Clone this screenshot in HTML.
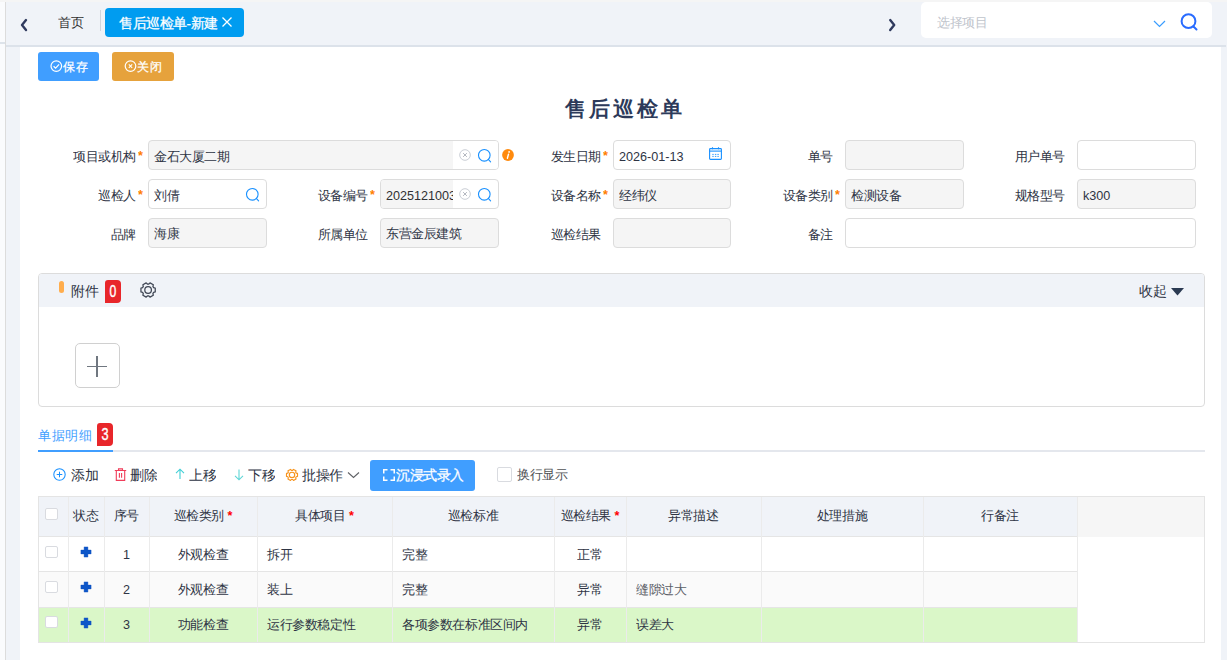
<!DOCTYPE html>
<html><head><meta charset="utf-8">
<style>
*{box-sizing:border-box;margin:0;padding:0}
html,body{width:1227px;height:660px;overflow:hidden;background:#f5f5f5;font-family:"Liberation Sans",sans-serif;color:#303133}
.a{position:absolute}
.t{position:absolute;white-space:nowrap;transform:scale(.9);transform-origin:0 0;line-height:20px}
.tr{position:absolute;white-space:nowrap;transform:scale(.9);transform-origin:100% 0;line-height:20px;text-align:right}
.tc{position:absolute;white-space:nowrap;transform:scale(.9);transform-origin:50% 0;line-height:20px;text-align:center}
.inp{position:absolute;height:30px;border:1px solid #dcdcdc;border-radius:4px;background:#fff}
.dis{background:#f5f5f5}
.cb{position:absolute;width:13px;height:13px;border:1px solid #d9dbe0;border-radius:2px;background:#fff}
</style></head><body>

<div class="a" style="left:0;top:2px;width:5px;height:658px;background:#fafbfd"></div>
<div class="a" style="left:0;top:42px;width:5px;height:2px;background:#dde3ea"></div>
<div class="a" style="left:5px;top:2px;width:1px;height:658px;background:#dcdcdc"></div>
<div class="a" style="left:6px;top:2px;width:1221px;height:43px;background:#f0f3f8"></div>
<div class="a" style="left:6px;top:45px;width:1220px;height:2px;background:#dce2ea"></div>
<div class="a" style="left:1226px;top:45px;width:1px;height:2px;background:#f0f3f8"></div>
<div class="a" style="left:6px;top:47px;width:14px;height:613px;background:#f0f3f8"></div>
<div class="a" style="left:1221px;top:47px;width:6px;height:613px;background:#f0f3f8"></div>
<div class="a" style="left:20px;top:47px;width:1201px;height:613px;background:#fff"></div>
<svg class="a" style="left:19px;top:17px" width="12" height="16" viewBox="0 0 12 16"><path d="M7 3.1 L3 8.1 L7 13.1" fill="none" stroke="#2f3a5e" stroke-width="2.4" stroke-linecap="round" stroke-linejoin="round"/></svg>
<div class="t" style="left:58px;top:13.3px;font-size:14px;color:#333;">首页</div>
<div class="a" style="left:100px;top:10px;width:1px;height:21px;background:#d0d4dc"></div>
<div class="a" style="left:105px;top:8px;width:139px;height:29px;border-radius:4px;background:#009cf0"></div>
<div class="t" style="left:119px;top:14px;font-size:15px;color:#fff;-webkit-text-stroke:0.3px #fff">售后巡检单-新建</div>
<svg class="a" style="left:221px;top:16px" width="12" height="12" viewBox="0 0 12 12"><path d="M1.5 1.5 L10.5 10.5 M10.5 1.5 L1.5 10.5" stroke="#fff" stroke-width="1.3"/></svg>
<svg class="a" style="left:886px;top:17px" width="12" height="16" viewBox="0 0 12 16"><path d="M4.2 3.1 L8.2 8.1 L4.2 13.1" fill="none" stroke="#2f3a5e" stroke-width="2.4" stroke-linecap="round" stroke-linejoin="round"/></svg>
<div class="a" style="left:921px;top:2px;width:291px;height:36px;border-radius:5px;background:#fff"></div>
<div class="t" style="left:937px;top:13px;font-size:14px;color:#c0c4cc;">选择项目</div>
<svg class="a" style="left:1153px;top:19px" width="13" height="9" viewBox="0 0 13 9"><path d="M1 2 L6.5 7.5 L12 2" fill="none" stroke="#3a9dff" stroke-width="1.2"/></svg>
<svg class="a" style="left:1179px;top:12px" width="20" height="20" viewBox="0 0 20 20"><circle cx="9.5" cy="9.2" r="6.9" fill="none" stroke="#2a6cff" stroke-width="2"/><path d="M14.5 14.5 L17.5 17.5" stroke="#2a6cff" stroke-width="2" stroke-linecap="round"/></svg>
<div class="a" style="left:38px;top:52px;width:61px;height:29px;border-radius:3px;background:#409eff"></div>
<svg class="a" style="left:50px;top:60px" width="13" height="13" viewBox="0 0 13 13"><circle cx="6.3" cy="6.1" r="5.3" fill="none" stroke="#fff" stroke-width="1.2"/><path d="M3.6 6.2 L5.6 8.1 L9.1 4.3" fill="none" stroke="#fff" stroke-width="1.2"/></svg>
<div class="t" style="left:63px;top:58px;font-size:13.5px;color:#fff;-webkit-text-stroke:0.3px #fff">保存</div>
<div class="a" style="left:112px;top:52px;width:62px;height:29px;border-radius:3px;background:#e6a23c"></div>
<svg class="a" style="left:124px;top:60px" width="13" height="13" viewBox="0 0 13 13"><circle cx="6.5" cy="6.1" r="5.3" fill="none" stroke="#fff" stroke-width="1.2"/><path d="M4.8 4.4 L8.2 7.8 M8.2 4.4 L4.8 7.8" stroke="#fff" stroke-width="1.1"/></svg>
<div class="t" style="left:137px;top:58px;font-size:13.5px;color:#fff;-webkit-text-stroke:0.3px #fff">关闭</div>
<div class="t" style="left:565px;top:96px;font-size:23px;color:#2d3a5a;font-weight:bold;letter-spacing:3.7px;line-height:28px">售后巡检单</div>
<div class="tr" style="right:1091px;top:147px;font-size:14px;color:#2e3444;">项目或机构</div>
<div class="t" style="left:138px;top:149px;font-size:14px;color:#ff7d00;line-height:14px;font-weight:bold">*</div>
<div class="inp dis" style="left:148px;top:140px;width:351px;"></div>
<div class="t" style="left:154px;top:147px;font-size:14px;color:#2e3444;">金石大厦二期</div>
<div class="a" style="left:453px;top:141px;width:45px;height:28px;background:#fff;border-radius:0 3px 3px 0"></div>
<svg class="a" style="left:459px;top:149px" width="12" height="12" viewBox="0 0 12 12"><circle cx="6" cy="6" r="5.3" fill="none" stroke="#c4c8d0" stroke-width="0.9"/><path d="M4.1 4.1 L7.9 7.9 M7.9 4.1 L4.1 7.9" stroke="#b4b8c0" stroke-width="1"/></svg>
<svg class="a" style="left:477px;top:148px" width="16" height="16" viewBox="0 0 16 16"><circle cx="7.3" cy="7.3" r="5.8" fill="none" stroke="#1890ff" stroke-width="1.1"/><path d="M11.3 11.3 L13.6 13.8" stroke="#1890ff" stroke-width="1.1" stroke-linecap="round"/></svg>
<svg class="a" style="left:502px;top:149px" width="12" height="12" viewBox="0 0 12 12"><circle cx="6" cy="6" r="5.9" fill="#ff8a0d"/><circle cx="7.1" cy="2.9" r="0.85" fill="#fff"/><path d="M6.5 5.1 L5.4 9.3" stroke="#fff" stroke-width="1.4" stroke-linecap="round"/></svg>
<div class="tr" style="right:626px;top:147px;font-size:14px;color:#2e3444;">发生日期</div>
<div class="t" style="left:603px;top:149px;font-size:14px;color:#ff7d00;line-height:14px;font-weight:bold">*</div>
<div class="inp" style="left:613px;top:140px;width:118px;"></div>
<div class="t" style="left:619px;top:147px;font-size:14px;color:#2e3444;">2026-01-13</div>
<svg class="a" style="left:709px;top:147px" width="13" height="13" viewBox="0 0 13 13"><rect x="0.6" y="1.6" width="11.8" height="10.8" rx="0.8" fill="none" stroke="#1890ff" stroke-width="1.1"/><path d="M0.6 4.1 H12.4" stroke="#1890ff" stroke-width="1.1"/><path d="M3.5 0.3 V2.3 M9.5 0.3 V2.3" stroke="#1890ff" stroke-width="1.1"/><path d="M3.3 7.4 H4.7 M5.9 7.4 H7.3 M8.4 7.4 H9.8 M3.3 9.4 H4.7 M5.9 9.4 H7.3 M8.4 9.4 H9.8" stroke="#1890ff" stroke-width="0.9"/></svg>
<div class="tr" style="right:394px;top:147px;font-size:14px;color:#2e3444;">单号</div>
<div class="inp dis" style="left:845px;top:140px;width:119px;"></div>
<div class="tr" style="right:162px;top:147px;font-size:14px;color:#2e3444;">用户单号</div>
<div class="inp" style="left:1077px;top:140px;width:119px;"></div>
<div class="tr" style="right:1091px;top:186px;font-size:14px;color:#2e3444;">巡检人</div>
<div class="t" style="left:138px;top:188px;font-size:14px;color:#ff7d00;line-height:14px;font-weight:bold">*</div>
<div class="inp" style="left:148px;top:179px;width:119px;"></div>
<div class="t" style="left:154px;top:186px;font-size:14px;color:#2e3444;">刘倩</div>
<svg class="a" style="left:245px;top:187px" width="16" height="16" viewBox="0 0 16 16"><circle cx="7.3" cy="7.3" r="5.8" fill="none" stroke="#1890ff" stroke-width="1.1"/><path d="M11.3 11.3 L13.6 13.8" stroke="#1890ff" stroke-width="1.1" stroke-linecap="round"/></svg>
<div class="tr" style="right:859px;top:186px;font-size:14px;color:#2e3444;">设备编号</div>
<div class="t" style="left:370px;top:188px;font-size:14px;color:#ff7d00;line-height:14px;font-weight:bold">*</div>
<div class="inp" style="left:380px;top:179px;width:119px"></div>
<div class="a" style="left:381px;top:180px;width:72px;height:28px;background:#f5f5f5;border-radius:3px 0 0 3px;overflow:hidden"><div class="t" style="left:5px;top:6px;font-size:14px">2025121003</div></div>
<svg class="a" style="left:459px;top:188px" width="12" height="12" viewBox="0 0 12 12"><circle cx="6" cy="6" r="5.3" fill="none" stroke="#c4c8d0" stroke-width="0.9"/><path d="M4.1 4.1 L7.9 7.9 M7.9 4.1 L4.1 7.9" stroke="#b4b8c0" stroke-width="1"/></svg>
<svg class="a" style="left:477px;top:187px" width="16" height="16" viewBox="0 0 16 16"><circle cx="7.3" cy="7.3" r="5.8" fill="none" stroke="#1890ff" stroke-width="1.1"/><path d="M11.3 11.3 L13.6 13.8" stroke="#1890ff" stroke-width="1.1" stroke-linecap="round"/></svg>
<div class="tr" style="right:626px;top:186px;font-size:14px;color:#2e3444;">设备名称</div>
<div class="t" style="left:603px;top:188px;font-size:14px;color:#ff7d00;line-height:14px;font-weight:bold">*</div>
<div class="inp dis" style="left:613px;top:179px;width:118px;"></div>
<div class="t" style="left:619px;top:186px;font-size:14px;color:#2e3444;">经纬仪</div>
<div class="tr" style="right:394px;top:186px;font-size:14px;color:#2e3444;">设备类别</div>
<div class="t" style="left:835px;top:188px;font-size:14px;color:#ff7d00;line-height:14px;font-weight:bold">*</div>
<div class="inp dis" style="left:845px;top:179px;width:119px;"></div>
<div class="t" style="left:851px;top:186px;font-size:14px;color:#2e3444;">检测设备</div>
<div class="tr" style="right:162px;top:186px;font-size:14px;color:#2e3444;">规格型号</div>
<div class="inp dis" style="left:1077px;top:179px;width:119px;"></div>
<div class="t" style="left:1083px;top:186px;font-size:14px;color:#2e3444;">k300</div>
<div class="tr" style="right:1091px;top:225px;font-size:14px;color:#2e3444;">品牌</div>
<div class="inp dis" style="left:148px;top:218px;width:119px;"></div>
<div class="t" style="left:154px;top:224px;font-size:14px;color:#2e3444;">海康</div>
<div class="tr" style="right:859px;top:225px;font-size:14px;color:#2e3444;">所属单位</div>
<div class="inp dis" style="left:380px;top:218px;width:119px;"></div>
<div class="t" style="left:386px;top:224px;font-size:14px;color:#2e3444;">东营金辰建筑</div>
<div class="tr" style="right:626px;top:225px;font-size:14px;color:#2e3444;">巡检结果</div>
<div class="inp dis" style="left:613px;top:218px;width:118px;"></div>
<div class="tr" style="right:394px;top:225px;font-size:14px;color:#2e3444;">备注</div>
<div class="inp" style="left:845px;top:218px;width:351px;"></div>
<div class="a" style="left:38px;top:273px;width:1167px;height:134px;border:1px solid #dcdcdc;border-radius:4px;background:#fff;overflow:hidden"><div style="height:33px;background:#f0f3f8"></div></div>
<div class="a" style="left:59px;top:281px;width:5px;height:12px;border-radius:3px;background:#ffad4d"></div>
<div class="t" style="left:71px;top:282px;font-size:16px;color:#2e3444;">附件</div>
<div class="a" style="left:105px;top:280px;width:16px;height:23px;background:#e8262a;border-radius:3px 4px 4px 0"></div>
<div class="tc" style="left:105px;width:16px;top:283px;font-size:17px;color:#fff;transform:scale(.72,.92);-webkit-text-stroke:0.4px #fff">0</div>
<svg class="a" style="left:138px;top:280px" width="20" height="20" viewBox="0 0 20 20"><path d="M15.62 12.34 L17.25 11.92 L17.25 8.08 L15.62 7.66 L14.89 6.39 L15.33 4.77 L12.02 2.85 L10.83 4.04 L9.37 4.04 L8.18 2.85 L4.87 4.77 L5.31 6.39 L4.58 7.66 L2.95 8.08 L2.95 11.92 L4.58 12.34 L5.31 13.61 L4.87 15.23 L8.18 17.15 L9.37 15.96 L10.83 15.96 L12.02 17.15 L15.33 15.23 L14.89 13.61 Z" fill="none" stroke="#3f4654" stroke-width="1.25" stroke-linejoin="round"/><circle cx="10.099999999999994" cy="10.0" r="3.3" fill="none" stroke="#3f4654" stroke-width="1.25"/></svg>
<div class="t" style="left:1139px;top:282px;font-size:16px;color:#2e3444;">收起</div>
<svg class="a" style="left:1171px;top:287px" width="13" height="9" viewBox="0 0 13 9"><path d="M0 1 H13 L6.5 8.5 Z" fill="#2b3a52"/></svg>
<div class="a" style="left:75px;top:343px;width:45px;height:45px;border:1px solid #d0d0d0;border-radius:5px;background:#fff"></div>
<div class="a" style="left:87px;top:366px;width:20px;height:1.2px;background:#707780"></div>
<div class="a" style="left:96.4px;top:356px;width:1.2px;height:21px;background:#707780"></div>
<div class="t" style="left:38px;top:426px;font-size:14.5px;color:#409eff;">单据明细</div>
<div class="a" style="left:97px;top:423px;width:16px;height:23px;background:#e8262a;border-radius:3px 4px 4px 0"></div>
<div class="tc" style="left:97px;width:16px;top:425px;font-size:17px;color:#fff;transform:scale(.75,1.02);-webkit-text-stroke:0.4px #fff">3</div>
<div class="a" style="left:38px;top:450px;width:1167px;height:2px;background:#e4e7ed"></div>
<div class="a" style="left:38px;top:450px;width:75px;height:2px;background:#409eff"></div>
<svg class="a" style="left:52px;top:468px" width="14" height="14" viewBox="0 0 14 14"><circle cx="7.5" cy="6.5" r="5.7" fill="none" stroke="#1890ff" stroke-width="1.05"/><path d="M7.5 3.7 V9.3 M4.7 6.5 H10.3" stroke="#1890ff" stroke-width="1"/></svg>
<div class="t" style="left:71px;top:466px;font-size:15px;color:#2e3444;">添加</div>
<svg class="a" style="left:114px;top:468px" width="13" height="14" viewBox="0 0 13 14"><path d="M0.8 2.5 H12.2 M4.5 2.5 V0.9 H8.5 V2.5 M2.3 2.5 V12.4 H10.7 V2.5 M5.4 5 V9.8 M7.6 5 V9.8" fill="none" stroke="#f03d5a" stroke-width="1.1"/></svg>
<div class="t" style="left:130px;top:466px;font-size:15px;color:#2e3444;">删除</div>
<svg class="a" style="left:175px;top:468px" width="10" height="13" viewBox="0 0 10 13"><path d="M5 11 V1.2 M1 5.2 L5 1.2 L9 5.2" fill="none" stroke="#3fcfd6" stroke-width="1.1"/></svg>
<div class="t" style="left:189px;top:466px;font-size:15px;color:#2e3444;">上移</div>
<svg class="a" style="left:233.5px;top:469px" width="10" height="13" viewBox="0 0 10 13"><path d="M5 0.5 V10.8 M1 6.8 L5 10.8 L9 6.8" fill="none" stroke="#5fd6d6" stroke-width="1.1"/></svg>
<div class="t" style="left:248px;top:466px;font-size:15px;color:#2e3444;">下移</div>
<svg class="a" style="left:282px;top:464px" width="20" height="20" viewBox="0 0 20 20"><path d="M14.23 12.70 L15.51 12.38 L15.51 9.42 L14.23 9.10 L13.67 8.13 L14.03 6.87 L11.48 5.39 L10.56 6.33 L9.44 6.33 L8.52 5.39 L5.97 6.87 L6.33 8.13 L5.77 9.10 L4.49 9.42 L4.49 12.38 L5.77 12.70 L6.33 13.67 L5.97 14.93 L8.52 16.41 L9.44 15.47 L10.56 15.47 L11.48 16.41 L14.03 14.93 L13.67 13.67 Z" fill="none" stroke="#f7941d" stroke-width="1.15" stroke-linejoin="round"/><circle cx="10.0" cy="10.899999999999977" r="2.7" fill="none" stroke="#f7941d" stroke-width="1.15"/></svg>
<div class="t" style="left:302px;top:466px;font-size:15px;color:#2e3444;">批操作</div>
<svg class="a" style="left:347px;top:471px" width="13" height="8" viewBox="0 0 13 8"><path d="M1 1.5 L6.5 6.5 L12 1.5" fill="none" stroke="#606266" stroke-width="1.1"/></svg>
<div class="a" style="left:370px;top:460px;width:105px;height:31px;border-radius:3px;background:#409eff"></div>
<svg class="a" style="left:383px;top:469px" width="12" height="12" viewBox="0 0 12 12"><path d="M0.75 4.5 V0.75 H4.5 M7.5 0.75 H11.25 V4.5 M11.25 7.5 V11.25 H7.5 M4.5 11.25 H0.75 V7.5" fill="none" stroke="#fff" stroke-width="1.5"/></svg>
<div class="t" style="left:396px;top:466px;font-size:15px;color:#fff;-webkit-text-stroke:0.3px #fff">沉浸式录入</div>
<div class="cb" style="left:497px;top:467px;width:15px;height:15px"></div>
<div class="t" style="left:517px;top:465px;font-size:14px;color:#505255;">换行显示</div>
<div class="a" style="left:38px;top:496px;width:1167px;height:147px;border:1px solid #e4e4e4;background:#fff"></div>
<div class="a" style="left:39px;top:497px;width:1038px;height:39px;background:#f0f3f8"></div>
<div class="a" style="left:1077px;top:497px;width:127px;height:40px;background:#f6f6f6"></div>
<div class="a" style="left:39px;top:571px;width:1038px;height:36px;background:#fafafa"></div>
<div class="a" style="left:39px;top:607px;width:1038px;height:35px;background:#daf7c8"></div>
<div class="a" style="left:39px;top:536px;width:1038px;height:1px;background:#e5e5e5"></div>
<div class="a" style="left:39px;top:571px;width:1038px;height:1px;background:#e5e5e5"></div>
<div class="a" style="left:39px;top:607px;width:1038px;height:1px;background:#e5e5e5"></div>
<div class="a" style="left:68px;top:497px;width:1px;height:145px;background:#ebebeb"></div>
<div class="a" style="left:104px;top:497px;width:1px;height:145px;background:#ebebeb"></div>
<div class="a" style="left:149px;top:497px;width:1px;height:145px;background:#ebebeb"></div>
<div class="a" style="left:257px;top:497px;width:1px;height:145px;background:#ebebeb"></div>
<div class="a" style="left:392px;top:497px;width:1px;height:145px;background:#ebebeb"></div>
<div class="a" style="left:554px;top:497px;width:1px;height:145px;background:#ebebeb"></div>
<div class="a" style="left:626px;top:497px;width:1px;height:145px;background:#ebebeb"></div>
<div class="a" style="left:761px;top:497px;width:1px;height:145px;background:#ebebeb"></div>
<div class="a" style="left:923px;top:497px;width:1px;height:145px;background:#ebebeb"></div>
<div class="a" style="left:1077px;top:497px;width:1px;height:145px;background:#ebebeb"></div>
<div class="cb" style="left:45px;top:508px;width:13px;height:12px"></div>
<div class="tc" style="left:68px;width:36px;top:506px;font-size:14px;color:#2e3444;">状态</div>
<div class="tc" style="left:104px;width:45px;top:506px;font-size:14px;color:#2e3444;">序号</div>
<div class="tc" style="left:149px;width:108px;top:506px;font-size:14px;color:#2e3444;">巡检类别 <span style="color:#f00;font-weight:bold">*</span></div>
<div class="tc" style="left:257px;width:135px;top:506px;font-size:14px;color:#2e3444;">具体项目 <span style="color:#f00;font-weight:bold">*</span></div>
<div class="tc" style="left:392px;width:162px;top:506px;font-size:14px;color:#2e3444;">巡检标准</div>
<div class="tc" style="left:554px;width:72px;top:506px;font-size:14px;color:#2e3444;">巡检结果 <span style="color:#f00;font-weight:bold">*</span></div>
<div class="tc" style="left:626px;width:135px;top:506px;font-size:14px;color:#2e3444;">异常描述</div>
<div class="tc" style="left:761px;width:162px;top:506px;font-size:14px;color:#2e3444;">处理措施</div>
<div class="tc" style="left:923px;width:154px;top:506px;font-size:14px;color:#2e3444;">行备注</div>
<div class="cb" style="left:45px;top:546px;width:13px;height:12px"></div>
<svg class="a" style="left:80px;top:546px" width="12" height="12" viewBox="0 0 12 12"><path d="M4.1 0.9 H7.9 V4.1 H11.1 V7.9 H7.9 V11.1 H4.1 V7.9 H0.9 V4.1 H4.1 Z" fill="#0d56c8" stroke="#0b4fc0" stroke-width="0.4" stroke-linejoin="round"/></svg>
<div class="tc" style="left:104px;width:45px;top:545px;font-size:14px;color:#2e3444;">1</div>
<div class="tc" style="left:149px;width:108px;top:545px;font-size:14px;color:#2e3444;">外观检查</div>
<div class="t" style="left:267px;top:545px;font-size:14px;color:#2e3444;">拆开</div>
<div class="t" style="left:402px;top:545px;font-size:14px;color:#2e3444;">完整</div>
<div class="tc" style="left:554px;width:72px;top:545px;font-size:14px;color:#2e3444;">正常</div>
<div class="t" style="left:636px;top:545px;font-size:14px;color:#2e3444;"></div>
<div class="cb" style="left:45px;top:581px;width:13px;height:12px"></div>
<svg class="a" style="left:80px;top:581px" width="12" height="12" viewBox="0 0 12 12"><path d="M4.1 0.9 H7.9 V4.1 H11.1 V7.9 H7.9 V11.1 H4.1 V7.9 H0.9 V4.1 H4.1 Z" fill="#0d56c8" stroke="#0b4fc0" stroke-width="0.4" stroke-linejoin="round"/></svg>
<div class="tc" style="left:104px;width:45px;top:580px;font-size:14px;color:#2e3444;">2</div>
<div class="tc" style="left:149px;width:108px;top:580px;font-size:14px;color:#2e3444;">外观检查</div>
<div class="t" style="left:267px;top:580px;font-size:14px;color:#2e3444;">装上</div>
<div class="t" style="left:402px;top:580px;font-size:14px;color:#2e3444;">完整</div>
<div class="tc" style="left:554px;width:72px;top:580px;font-size:14px;color:#2e3444;">异常</div>
<div class="t" style="left:636px;top:580px;font-size:14px;color:#5c6068;">缝隙过大</div>
<div class="cb" style="left:45px;top:616px;width:13px;height:12px"></div>
<svg class="a" style="left:80px;top:617px" width="12" height="12" viewBox="0 0 12 12"><path d="M4.1 0.9 H7.9 V4.1 H11.1 V7.9 H7.9 V11.1 H4.1 V7.9 H0.9 V4.1 H4.1 Z" fill="#0d56c8" stroke="#0b4fc0" stroke-width="0.4" stroke-linejoin="round"/></svg>
<div class="tc" style="left:104px;width:45px;top:615px;font-size:14px;color:#2e3444;">3</div>
<div class="tc" style="left:149px;width:108px;top:615px;font-size:14px;color:#2e3444;">功能检查</div>
<div class="t" style="left:267px;top:615px;font-size:14px;color:#2e3444;">运行参数稳定性</div>
<div class="t" style="left:402px;top:615px;font-size:14px;color:#2e3444;">各项参数在标准区间内</div>
<div class="tc" style="left:554px;width:72px;top:615px;font-size:14px;color:#2e3444;">异常</div>
<div class="t" style="left:636px;top:615px;font-size:14px;color:#2e3444;">误差大</div>
</body></html>
